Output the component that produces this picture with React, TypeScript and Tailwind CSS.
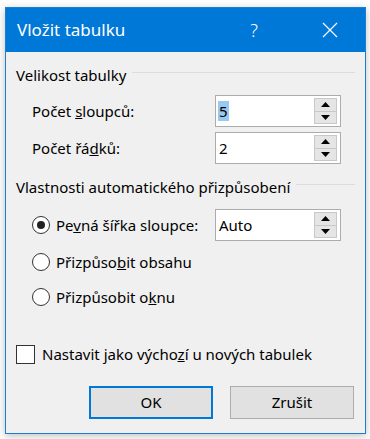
import React from 'react'

const font = { fontFamily: '"Noto Sans", "Open Sans", Arial, sans-serif' }

const Spin = ({ value, selected }: { value: string; selected?: boolean }) => (
  <div className="w-[126px] h-[32px] bg-white border border-[#acacac] flex items-center justify-between pl-[2px] pr-[3px]">
    <span className={`text-[15px] leading-[20px] px-[1px] ${selected ? 'bg-[#99c9ef]' : ''}`}>{value}</span>
    <div className="flex flex-col w-[23px] h-[26px]">
      <div className="flex-1 bg-[#e5e5e5] border border-[#c8c8c8] flex items-center justify-center">
        <svg width="9" height="5" viewBox="0 0 9 5"><path d="M0 5 L4.5 0 L9 5 Z" fill="#000" /></svg>
      </div>
      <div className="flex-1 bg-[#e5e5e5] border border-t-0 border-[#c8c8c8] flex items-center justify-center">
        <svg width="9" height="5" viewBox="0 0 9 5"><path d="M0 0 L9 0 L4.5 5 Z" fill="#000" /></svg>
      </div>
    </div>
  </div>
)

const GroupHeader = ({ text }: { text: string }) => (
  <div className="flex items-center h-[20px] pl-[10px] pr-[10px]">
    <span className="text-[15px] leading-[20px] whitespace-nowrap">{text}</span>
    <div className="flex-1 h-px bg-[#dcdcdc] ml-[6px] -mt-[6px]" />
  </div>
)

const Radio = ({ checked }: { checked?: boolean }) => (
  <div className="w-[18px] h-[18px] rounded-full border border-[#333] bg-white flex items-center justify-center shrink-0">
    {checked && <div className="w-[8px] h-[8px] rounded-full bg-[#222]" />}
  </div>
)

export default function App() {
  return (
    <div className="w-[370px] h-[439px] bg-white pt-[7px] pl-[5px] text-black" style={font}>
      <div className="w-[361px] h-[427px] border border-[#1a7fd4] bg-[#f0f0f0] flex flex-col shadow-[0_2px_8px_rgba(0,0,0,0.25)]">
        {/* Title bar */}
        <div className="h-[44px] bg-[#0078d7] flex items-center text-white shrink-0">
          <span className="pl-[11px] text-[17px] leading-[24px] flex-1">Vložit tabulku</span>
          <span className="w-[20px] text-center text-[18px] leading-[24px] font-light mr-[58px]">?</span>
          <svg width="16" height="16" viewBox="0 0 16 16" className="mr-[27px]">
            <path d="M1 1 L15 15 M15 1 L1 15" stroke="#fff" strokeWidth="1.2" />
          </svg>
        </div>

        {/* Velikost tabulky */}
        <div className="mt-[13px]">
          <GroupHeader text="Velikost tabulky" />
        </div>
        <div className="mt-[10px] flex items-center pl-[26px]">
          <span className="w-[183px] text-[15px]">Počet <u>s</u>loupců:</span>
          <Spin value="5" selected />
        </div>
        <div className="mt-[5px] flex items-center pl-[26px]">
          <span className="w-[183px] text-[15px]">Počet řá<u>d</u>ků:</span>
          <Spin value="2" />
        </div>

        {/* Vlastnosti */}
        <div className="mt-[13px]">
          <GroupHeader text="Vlastnosti automatického přizpůsobení" />
        </div>
        <div className="mt-[12px] flex items-center pl-[26px]">
          <Radio checked />
          <span className="w-[165px] pl-[6px] text-[15px]">Pe<u>v</u>ná šířka sloupce:</span>
          <Spin value="Auto" />
        </div>
        <div className="mt-[11px] flex items-center pl-[26px] h-[20px]">
          <Radio />
          <span className="pl-[6px] text-[15px]">Přizpůso<u>b</u>it obsahu</span>
        </div>
        <div className="mt-[15px] flex items-center pl-[26px] h-[20px]">
          <Radio />
          <span className="pl-[6px] text-[15px]">Přizpůsobit o<u>k</u>nu</span>
        </div>

        {/* Checkbox */}
        <div className="mt-[37px] flex items-center pl-[10px] h-[20px]">
          <div className="w-[19px] h-[19px] border border-[#333] bg-white shrink-0" />
          <span className="pl-[7px] text-[15px]">Nastavit jako výcho<u>z</u>í u nových tabulek</span>
        </div>

        {/* Buttons */}
        <div className="mt-[22px] flex justify-end gap-[17px] pr-[11px]">
          <button className="w-[124px] h-[33px] bg-[#e1e1e1] border-2 border-[#0078d7] text-[15px]">OK</button>
          <button className="w-[124px] h-[33px] bg-[#e1e1e1] border border-[#adadad] text-[15px]">Zrušit</button>
        </div>
      </div>
    </div>
  )
}
